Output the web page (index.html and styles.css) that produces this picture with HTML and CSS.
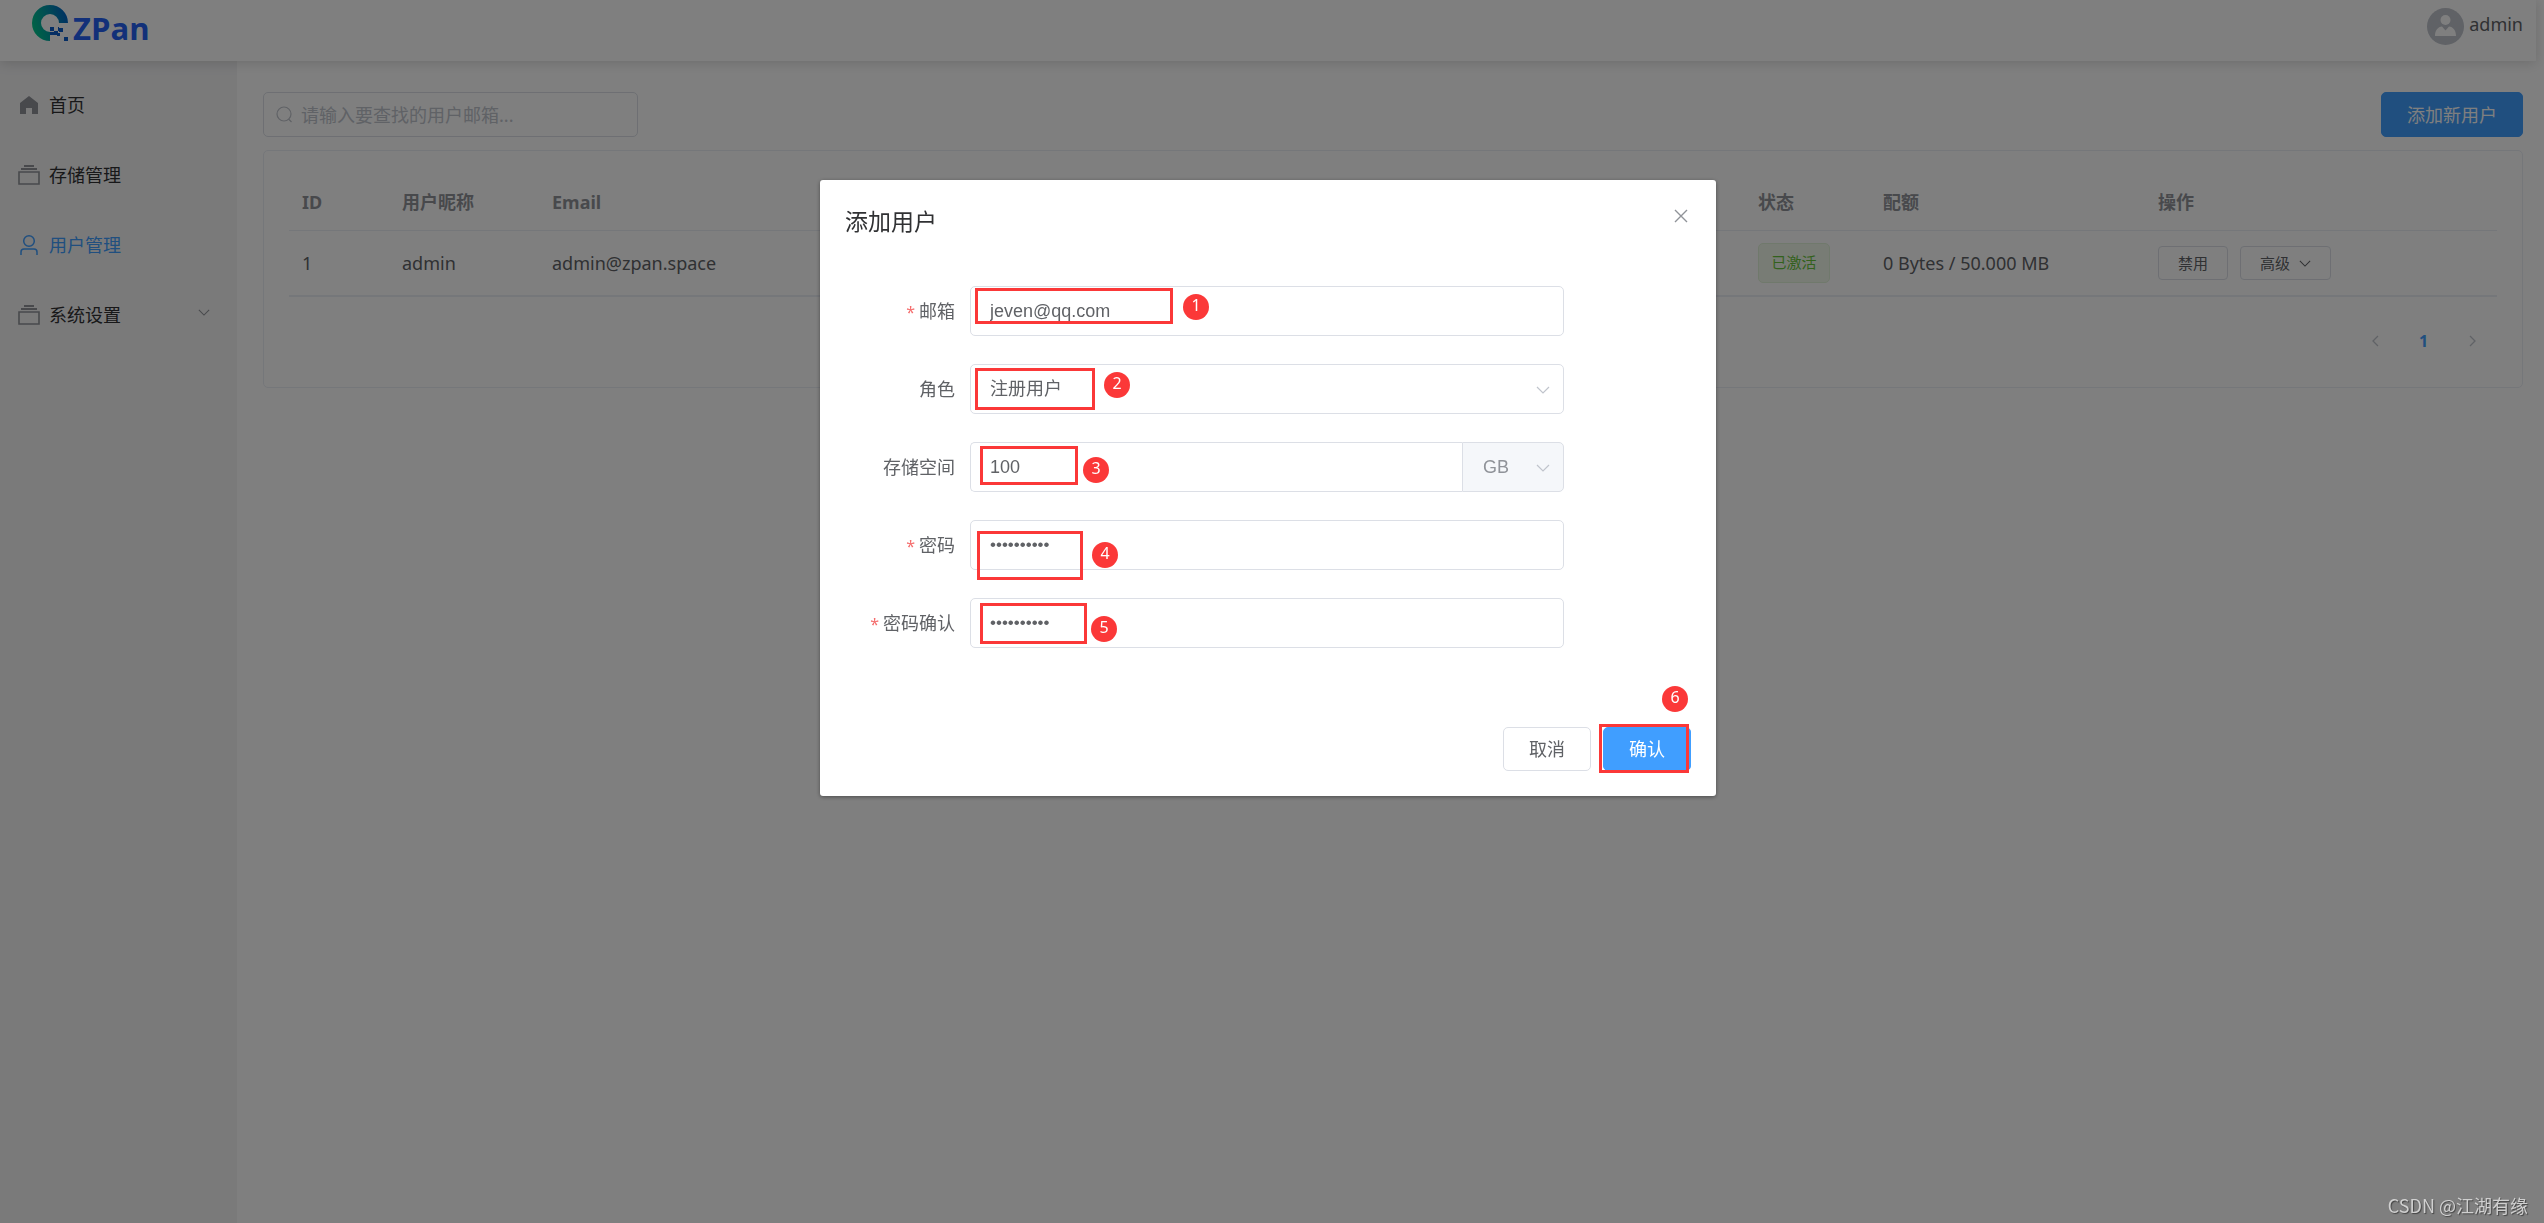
FILE: index.html
```html
<!DOCTYPE html>
<html lang="zh-CN">
<head>
<meta charset="utf-8">
<meta name="viewport" content="width=device-width, initial-scale=1">
<title>ZPan - 用户管理</title>
<link rel="stylesheet" href="styles.css">
</head>
<body>
<svg class="sprite" aria-hidden="true">
  <symbol id="down" viewBox="0 0 14 8"><path d="M1 1l6 6 6-6" fill="none" stroke="currentColor" stroke-width="1.2"/></symbol>
  <symbol id="files" viewBox="0 0 22 20"><path d="M6 1h10M3 4h16" fill="none" stroke="currentColor" stroke-width="2"/><path d="M1 7h20v12H1z" fill="none" stroke="currentColor" stroke-width="1.6"/></symbol>
</svg>
<div class="app">
  <header class="topbar">
    <a class="logo" href="#">
      <svg width="37" height="37" viewBox="0 0 37 37" aria-hidden="true">
        <defs><linearGradient id="ring" x1="0" y1="0.6" x2="1" y2="0.3"><stop offset="0" stop-color="#00c78c"/><stop offset="0.5" stop-color="#0097a8"/><stop offset="1" stop-color="#0060c8"/></linearGradient></defs>
        <path d="M18 36A18 18 0 1 1 36 18H27A9 9 0 1 0 18 27z" fill="url(#ring)"/>
        <path d="M18 22h4v4h-4zM22 26h4v4h-4zM26 22h1v4h-1zM27 23h4v4h-4zM18 30h4v-3h-4zM25 28h3v3h-3zM32 32h4v4h-4z" fill="#0a5cc8"/>
      </svg>
      <span class="logo-text">ZPan</span>
    </a>
    <div class="account">
      <svg class="avatar" width="37" height="37" viewBox="0 0 37 37" aria-hidden="true"><circle cx="18.500" cy="18.500" r="18.500" fill="#c0c4cc"/><circle cx="18.500" cy="12" r="5" fill="#fff"/><path d="M8 28c0-6 3-9 7-9.500l3.500 4 3.500-4c4 .5 7 3.500 7 9.500z" fill="#fff"/></svg>
      <span>admin</span>
    </div>
  </header>
  <div class="body">
    <nav class="sidebar">
      <a href="#" class="item"><svg width="22" height="20" viewBox="0 0 22 20"><path d="M2 8l9-7 9 7v11h-6v-6H8v6H2z" fill="currentColor"/></svg><span>首页</span></a>
      <a href="#" class="item"><svg width="22" height="20"><use href="#files"/></svg><span>存储管理</span></a>
      <a href="#" class="item active"><svg width="22" height="22" viewBox="0 0 22 22"><circle cx="11" cy="7" r="5.300" fill="none" stroke="currentColor" stroke-width="1.500"/><path d="M3 21v-3q0-3 3-3h10q3 0 3 3v3" fill="none" stroke="currentColor" stroke-width="1.500"/></svg><span>用户管理</span></a>
      <a href="#" class="item"><svg width="22" height="20"><use href="#files"/></svg><span>系统设置</span><svg class="more" width="12" height="7"><use href="#down"/></svg></a>
    </nav>
    <main class="main">
      <div class="toolbar">
        <label class="search">
          <svg width="17" height="17" viewBox="0 0 17 17" aria-hidden="true"><circle cx="8" cy="8" r="7" fill="none" stroke="currentColor" stroke-width="1.200"/><path d="M12.500 13l3 3" stroke="currentColor" stroke-width="1.200"/></svg>
          <input type="text" aria-label="搜索用户" placeholder="请输入要查找的用户邮箱...">
        </label>
        <button type="button" class="btn primary">添加新用户</button>
      </div>
      <section class="card">
        <table class="users">
          <colgroup><col class="c-id"><col class="c-name"><col><col class="c-state"><col class="c-quota"><col class="c-ops"></colgroup>
          <thead><tr><th>ID</th><th>用户昵称</th><th>Email</th><th>状态</th><th>配额</th><th>操作</th></tr></thead>
          <tbody><tr>
            <td>1</td><td>admin</td><td>admin@zpan.space</td>
            <td><span class="tag">已激活</span></td>
            <td>0 Bytes / 50.000 MB</td>
            <td><div class="ops"><button type="button" class="btn small">禁用</button><button type="button" class="btn small">高级<svg width="12" height="7"><use href="#down"/></svg></button></div></td>
          </tr></tbody>
        </table>
        <div class="pager">
          <button type="button" aria-label="上一页"><svg width="8" height="12" viewBox="0 0 8 12"><path d="M7 1L2 6l5 5" fill="none" stroke="currentColor" stroke-width="1.300"/></svg></button>
          <button type="button" class="current">1</button>
          <button type="button" aria-label="下一页"><svg width="8" height="12" viewBox="0 0 8 12"><path d="M1 1l5 5-5 5" fill="none" stroke="currentColor" stroke-width="1.300"/></svg></button>
        </div>
      </section>
    </main>
  </div>
</div>

<div class="overlay">
  <form class="dialog" role="dialog" aria-labelledby="dialog-title">
    <div class="dialog-head">
      <h2 id="dialog-title">添加用户</h2>
      <button type="button" class="close" aria-label="关闭"><svg width="14" height="14" viewBox="0 0 14 14"><path d="M1 1l12 12M13 1L1 13" stroke="currentColor" stroke-width="1.400"/></svg></button>
    </div>
    <div class="fields">
      <div class="field"><label class="required" for="email">邮箱</label><input id="email" type="text" value="jeven@qq.com"></div>
      <div class="field"><label for="role">角色</label><div class="select"><select id="role"><option>注册用户</option></select><svg width="14" height="8"><use href="#down"/></svg></div></div>
      <div class="field"><label for="storage">存储空间</label><div class="group"><input id="storage" type="text" value="100"><div class="select unit"><select aria-label="单位"><option>GB</option></select><svg width="14" height="8"><use href="#down"/></svg></div></div></div>
      <div class="field"><label class="required" for="pwd">密码</label><input id="pwd" type="password" value="abcdefghij"></div>
      <div class="field"><label class="required" for="pwd2">密码确认</label><input id="pwd2" type="password" value="abcdefghij"></div>
    </div>
    <div class="dialog-foot">
      <button type="button" class="btn">取消</button>
      <button type="button" class="btn primary">确认</button>
    </div>
    <i class="mark m1"></i><b class="step s1">1</b>
    <i class="mark m2"></i><b class="step s2">2</b>
    <i class="mark m3"></i><b class="step s3">3</b>
    <i class="mark m4"></i><b class="step s4">4</b>
    <i class="mark m5"></i><b class="step s5">5</b>
    <i class="mark m6"></i><b class="step s6">6</b>
  </form>
</div>
<div class="watermark">CSDN @江湖有缘</div>
</body>
</html>
```
FILE: styles.css
```css
* { box-sizing: border-box; }
body {
  margin: 0;
  background: #fff;
  color: #303133;
  font: 18px/24px "Noto Sans", "Noto Sans CJK SC", sans-serif;
}
a { color: inherit; text-decoration: none; }
button, input, select { font: inherit; color: inherit; margin: 0; }
.sprite { position: absolute; width: 0; height: 0; }

.app { display: flex; flex-direction: column; min-height: 100vh; margin-right: 8px; }
.topbar {
  display: flex;
  justify-content: space-between;
  align-items: flex-start;
  height: 61px;
  padding: 5px 13px 0 32px;
  box-shadow: 0 2px 12px rgba(0, 0, 0, .15);
  z-index: 1;
}
.logo { display: flex; align-items: flex-start; gap: 4px; }
.logo-text { font: 700 31px/46px "Open Sans", sans-serif; color: #2461f2; }
.account { display: flex; gap: 5px; padding-top: 3px; color: #606266; }
.account span { padding-top: 4px; }

.body { display: flex; flex: 1; }
.sidebar { flex: none; width: 237px; padding-top: 9px; background: #f4f4f5; }
.item { display: flex; align-items: center; gap: 9px; height: 70px; padding: 0 27px 0 18px; }
.item svg { color: #909399; }
.item.active, .item.active svg { color: #409eff; }
.item .more { margin: 0 0 6px auto; }

.main { flex: 1; min-width: 0; padding: 31px 13px 0 26px; }
.toolbar { display: flex; justify-content: space-between; margin-bottom: 13px; }
.search {
  display: flex;
  align-items: center;
  gap: 8px;
  width: 375px;
  height: 45px;
  padding: 0 12px;
  border: 1px solid #dcdfe6;
  border-radius: 5px;
  color: #c0c4cc;
}
.search input { flex: 1; min-width: 0; border: 0; padding: 0; outline: 0; background: none; }
.search input::placeholder { color: #c0c4cc; opacity: 1; }

.btn {
  display: inline-flex;
  align-items: center;
  justify-content: center;
  height: 45px;
  padding: 0 25px;
  border: 1px solid #dcdfe6;
  border-radius: 5px;
  background: #fff;
  color: #606266;
}
.btn.primary { background: #409eff; border-color: #409eff; color: #fff; }
.btn.small { height: 34px; padding: 0 19px; gap: 9px; font-size: 15px; border-radius: 4px; }

.card { padding: 25px 25px 26px; border: 1px solid #ebeef5; border-radius: 5px; }
.users { width: 100%; table-layout: fixed; border-collapse: separate; border-spacing: 0; border-bottom: 2px solid #ebeef5; }
.c-id { width: 100px; }
.c-name { width: 150px; }
.c-state { width: 125px; }
.c-quota { width: 275px; }
.c-ops { width: 352px; }
.users th, .users td { padding: 0 13px; text-align: left; }
.users th { height: 55px; padding-bottom: 2px; border-bottom: 1px solid #ebeef5; color: #909399; }
.users td { height: 64px; color: #606266; }
.tag {
  display: block;
  width: 72px;
  height: 40px;
  border: 1px solid #e1f3d8;
  border-radius: 5px;
  background: #f0f9eb;
  color: #67c23a;
  font-size: 15px;
  line-height: 36px;
  text-align: center;
}
.ops { display: flex; gap: 12px; }
.pager { display: flex; justify-content: flex-end; padding: 26px 0 2px; }
.pager button { width: 49px; height: 36px; border: 0; padding: 0; background: none; color: #c0c4cc; font-size: 16px; font-weight: 700; }
.pager .current { color: #409eff; }

.overlay {
  position: fixed;
  inset: 0;
  display: flex;
  align-items: flex-start;
  justify-content: center;
  padding: 180px 8px 0 0;
  background: rgba(0, 0, 0, .5);
  z-index: 10;
}
.dialog {
  position: relative;
  width: 896px;
  max-width: 96%;
  padding: 25px;
  border-radius: 3px;
  background: #fff;
  box-shadow: 0 1px 4px rgba(0, 0, 0, .4);
}
.dialog-head { display: flex; justify-content: space-between; align-items: flex-start; }
.dialog-head h2 { margin: 0; font-size: 23px; line-height: 32px; font-weight: 400; }
.close { display: flex; border: 0; padding: 4px 3px; background: none; color: #909399; }
.fields { display: flex; flex-direction: column; gap: 28px; margin: 49px 127px 0 0; }
.field { display: flex; align-items: center; color: #606266; }
.field > label { flex: none; width: 125px; padding-right: 15px; text-align: right; }
.required::before { content: "*"; margin-right: 4px; color: #f56c6c; font-size: 16px; }
.field input, .select select {
  flex: 1;
  min-width: 0;
  width: 100%;
  height: 50px;
  padding: 0 19px;
  border: 1px solid #dcdfe6;
  border-radius: 5px;
  outline: 0;
  background: #fff;
  color: #606266;
  font-family: "Liberation Sans", "Noto Sans CJK SC", sans-serif;
}
.field input[type="password"] { font-size: 17px; }
.select { position: relative; flex: 1; }
.select select { display: block; appearance: none; }
.select svg { position: absolute; right: 14px; top: 22px; color: #c0c4cc; pointer-events: none; }
.group { display: flex; flex: 1; }
.group > input { border-radius: 5px 0 0 5px; border-right: 0; }
.unit { flex: none; width: 102px; }
.unit select { border-radius: 0 5px 5px 0; background: #f5f7fa; color: #909399; padding-left: 20px; }
.dialog-foot { display: flex; justify-content: flex-end; gap: 12px; margin-top: 79px; }
.dialog-foot .btn { height: 44px; }

/* red outlines and numbered steps laid over the form */
.mark { position: absolute; border: 3px solid #fb3838; pointer-events: none; }
.m1 { left: 155px; top: 108px; width: 198px; height: 36px; }
.m2 { left: 155px; top: 188px; width: 120px; height: 42px; }
.m3 { left: 160px; top: 266px; width: 98px; height: 39px; }
.m4 { left: 157px; top: 351px; width: 106px; height: 49px; }
.m5 { left: 160px; top: 423px; width: 107px; height: 41px; }
.m6 { right: 27px; bottom: 23px; width: 90px; height: 49px; }
.step {
  position: absolute;
  width: 26px;
  height: 26px;
  border-radius: 50%;
  background: #fb3838;
  color: #fff;
  font-size: 16px;
  font-weight: 400;
  line-height: 23px;
  text-align: center;
}
.s1 { left: 363px; top: 114px; }
.s2 { left: 284px; top: 192px; }
.s3 { left: 263px; top: 277px; }
.s4 { left: 272px; top: 362px; }
.s5 { left: 271px; top: 436px; }
.s6 { right: 28px; bottom: 84px; }

.watermark {
  position: fixed;
  right: 16px;
  bottom: 6px;
  z-index: 20;
  color: #d0d0d0;
  font-family: "Noto Sans CJK SC", sans-serif;
  text-shadow: 1px 1px 1px #444;
}
```
